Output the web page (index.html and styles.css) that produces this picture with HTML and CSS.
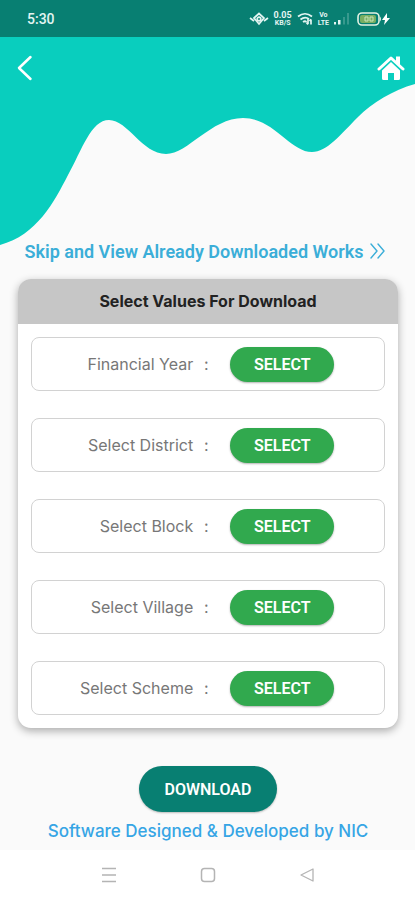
FILE: index.html
```html
<!DOCTYPE html>
<html lang="en">
<head>
<meta charset="utf-8">
<meta name="viewport" content="width=device-width, initial-scale=1">
<title>Select Values For Download</title>
<link rel="stylesheet" href="styles.css">
</head>
<body>
<div class="status">
  <span class="time">5:30</span>
  <div class="indicators">
    <svg width="20" height="14" viewBox="0 0 20 14" fill="none" stroke="currentColor" stroke-width="1.700"><path d="M1 6l4 3 M19 6l-4 3 M5 6l5-4.500 5 4.500-5 6z"/><circle cx="10" cy="7" r="1.800"/></svg>
    <span class="speed"><span>0.05</span><span>KB/S</span></span>
    <svg width="16" height="14" viewBox="0 0 16 14" fill="none" stroke="currentColor" stroke-width="1.700"><path d="M1 4.500q7-5.500 14 0M3.500 7.500q4.500-3.500 8.500-.5M6 10q2-1.500 3.500 0M11 7v5M9.500 10.500l1.500 2M14 12.500v-5M12.500 9L14 7.200"/></svg>
    <span class="network"><span>Vo</span><span>LTE</span></span>
    <svg width="16" height="14" viewBox="0 0 16 14" fill="currentColor"><path d="M0 10h2v2.500H0zM4 8h2.500v4.500H4z"/><path opacity=".22" d="M9 5h2v7.500H9zM13 1h2v11.500h-2z"/></svg>
    <svg class="battery" width="34" height="14" viewBox="0 0 34 14"><rect x="1" y="1" width="21" height="12" rx="4" fill="#087f72" stroke="#e3f2e4" stroke-width="1.600"/><rect x="3" y="3" width="16" height="8" rx="2" fill="#79ae62"/><path d="M8 5h3v4H8zM13 5h3v4h-3z" fill="none" stroke="#c9e3ba"/><path d="M23 4.500q2 2.500 0 5z" fill="#e3f2e4"/><path d="M30 1l-5 7h3l-1 5 6-7h-3z" fill="#fff"/></svg>
  </div>
</div>
<header class="header">
  <svg class="wave" viewBox="0 0 415 208" preserveAspectRatio="none" aria-hidden="true"><path d="M0 0H415V47C393 53 372 66 358 80C340 98 327 115 312 115C290 115 274 81 243 81C211 81 188 117 166 117C142 117 128 83 109 83C91 83 82 113 68 138C54 165 37 198 0 208Z"/></svg>
  <a class="back" href="#" aria-label="Back"><svg width="16" height="26" viewBox="0 0 16 26" fill="none" stroke="currentColor" stroke-width="2.500" stroke-linecap="round" stroke-linejoin="round"><path d="M13.500 2L2 13l11.500 11"/></svg></a>
  <a class="home" href="#" aria-label="Home"><svg width="28" height="26" viewBox="0 0 28 26"><path d="M2 14L14 3l12 11" fill="none" stroke="currentColor" stroke-width="3" stroke-linecap="round" stroke-linejoin="round"/><path d="M19 1.500h4v9l-4-4zM14 7l9 8.500v8q0 1.500-1.500 1.500H17v-7h-6v7H6.500Q5 25 5 23.500v-8z" fill="currentColor"/></svg></a>
</header>
<main class="main">
  <a class="skip" href="#">Skip and View Already Downloaded Works <svg width="15" height="16" viewBox="0 0 15 16" fill="none" stroke="currentColor" stroke-width="1.400" stroke-linecap="round" stroke-linejoin="round"><path d="M1 1l6 7-6 7M8 1l6 7-6 7"/></svg></a>
  <section class="card">
    <h1 class="title">Select Values For Download</h1>
    <div class="rows">
      <div class="row"><span class="label" id="year">Financial Year</span><span class="colon">:</span><button class="select" aria-describedby="year">SELECT</button></div>
      <div class="row"><span class="label" id="district">Select District</span><span class="colon">:</span><button class="select" aria-describedby="district">SELECT</button></div>
      <div class="row"><span class="label" id="block">Select Block</span><span class="colon">:</span><button class="select" aria-describedby="block">SELECT</button></div>
      <div class="row"><span class="label" id="village">Select Village</span><span class="colon">:</span><button class="select" aria-describedby="village">SELECT</button></div>
      <div class="row"><span class="label" id="scheme">Select Scheme</span><span class="colon">:</span><button class="select" aria-describedby="scheme">SELECT</button></div>
    </div>
  </section>
  <button class="download">DOWNLOAD</button>
  <p class="credit">Software Designed &amp; Developed by NIC</p>
</main>
<nav class="nav">
  <button aria-label="Recent apps"><svg width="16" height="16" viewBox="0 0 16 16" stroke="currentColor" stroke-width="1.500"><path d="M1 1.500h14M1 8h14M1 14.500h14"/></svg></button>
  <button aria-label="Home screen"><svg width="16" height="16" viewBox="0 0 16 16" fill="none" stroke="currentColor" stroke-width="1.500"><rect x="1.500" y="1.500" width="13" height="13" rx="3"/></svg></button>
  <button aria-label="Go back"><svg width="16" height="16" viewBox="0 0 16 16" fill="none" stroke="currentColor" stroke-width="1.300" stroke-linejoin="round"><path d="M14 2v12L2 8z"/></svg></button>
</nav>
</body>
</html>
```
FILE: styles.css
```css
* { box-sizing: border-box; }
body {
  margin: 0;
  min-height: 100vh;
  display: flex;
  flex-direction: column;
  background: #fafafa;
  font-family: Roboto, sans-serif;
}
button { border: 0; font-family: inherit; cursor: pointer; }
svg { display: block; }
a { text-decoration: none; }

.status {
  height: 37px;
  padding: 0 24px 0 27px;
  display: flex;
  align-items: center;
  justify-content: space-between;
  background: #087f72;
  color: #e3f5f2;
}
.time { font-size: 14px; font-weight: 500; }
.indicators { display: flex; align-items: center; gap: 5px; }
.speed, .network {
  display: flex;
  flex-direction: column;
  align-items: center;
  font-size: 7px;
  line-height: 8px;
  font-weight: 700;
}
.speed span:first-child { font-size: 9px; }
.battery { margin-left: 2px; }

.header {
  position: relative;
  height: 208px;
  padding: 18px 10px 0 17px;
  display: flex;
  align-items: flex-start;
  justify-content: space-between;
}
.wave { position: absolute; inset: 0; width: 100%; height: 100%; fill: #09cebe; }
.back, .home { position: relative; color: #fff; }

.main {
  display: flex;
  flex-direction: column;
  align-items: center;
  padding: 0 17px 0 18px;
}
.skip {
  display: flex;
  align-items: center;
  gap: 7px;
  margin-top: -6px;
  padding-right: 6px;
  height: 24px;
  color: #3baed8;
  font-size: 18px;
  font-weight: 600;
  white-space: nowrap;
  position: relative;
}
.card {
  align-self: stretch;
  margin-top: 16px;
  border-radius: 13px;
  background: #fff;
  box-shadow: 0 3px 8px rgba(0, 0, 0, 0.32);
  overflow: hidden;
}
.title {
  margin: 0;
  background: #c6c6c6;
  color: #222;
  font-family: Inter, sans-serif;
  font-size: 16px;
  line-height: 45px;
  font-weight: 700;
  text-align: center;
}
.rows { display: grid; gap: 27px; padding: 13px; }
.row {
  display: grid;
  grid-template-columns: 46fr 26px 47fr;
  align-items: center;
  height: 54px;
  border: 1px solid #d2d2d2;
  border-radius: 8px;
  color: #777;
  font-family: Inter, sans-serif;
  font-size: 16px;
}
.label { text-align: right; }
.colon { text-align: center; }
.select {
  width: 104px;
  height: 35px;
  margin-left: 11px;
  padding: 0;
  border-radius: 18px;
  background: #31a94e;
  color: #fff;
  font-family: Roboto, sans-serif;
  font-size: 16px;
  font-weight: 600;
  box-shadow: 0 1px 2px rgba(0, 0, 0, 0.3);
}
.download {
  width: 138px;
  height: 46px;
  margin-top: 38px;
  padding: 0;
  border-radius: 23px;
  background: #087f72;
  color: #fff;
  font-size: 16px;
  font-weight: 600;
  box-shadow: 0 1px 2px rgba(0, 0, 0, 0.25);
}
.credit {
  margin: 7px 0;
  color: #36a5e5;
  font-family: Inter, sans-serif;
  font-size: 17px;
  line-height: 24px;
  font-weight: 500;
  white-space: nowrap;
}
.nav {
  flex: 1;
  min-height: 50px;
  padding: 0 51px;
  display: flex;
  align-items: center;
  justify-content: center;
  background: #fff;
}
.nav button {
  width: 99px;
  height: 48px;
  display: grid;
  place-items: center;
  background: none;
  color: #b4b4b4;
}
```
